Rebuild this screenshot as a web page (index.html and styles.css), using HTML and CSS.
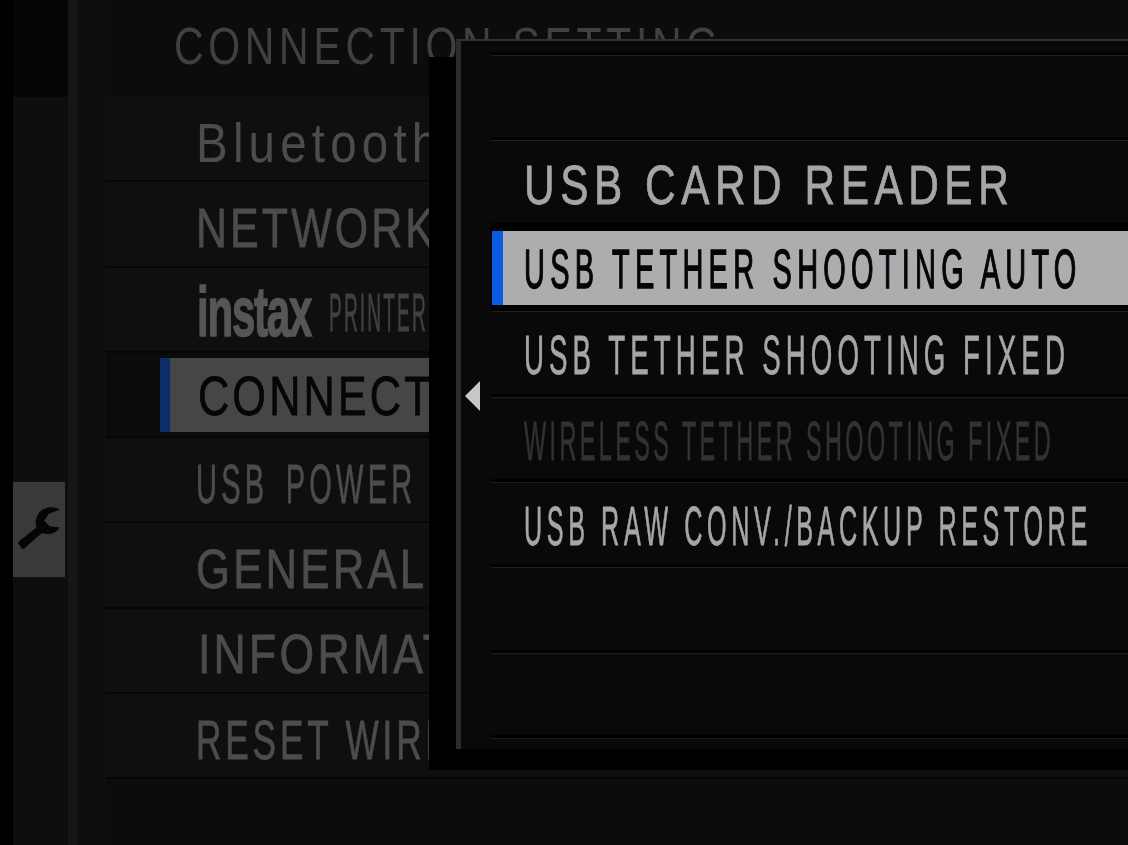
FILE: index.html
```html
<!DOCTYPE html>
<html lang="en">
<head>
<meta charset="utf-8">
<title>Connection Setting</title>
<link rel="stylesheet" href="styles.css">
</head>
<body>
<div class="screen">
  <div class="edge"></div>
  <aside class="rail">
    <div class="rail-top"></div>
    <div class="tile">
      <svg class="wrench" viewBox="0 0 44 44" width="49" height="49" aria-hidden="true"><path d="M42 5C35 1 26 3 22 10C20 14 20 18 21 21L6 33Q4 35 5 36L8 40Q10 41 11 39L26 26C32 28 38 27 42 21L33 20L28 15L32 9Z"/></svg>
    </div>
  </aside>
  <div class="strip"></div>
  <div class="gutter"></div>
  <main class="main">
    <h1 class="title"><span class="t t-title">CONNECTION SETTING</span></h1>
    <ul class="menu">
      <li class="item"><span class="t t-bt">Bluetooth SETTING</span></li>
      <li class="item"><span class="t t-net">NETWORK SETTING</span></li>
      <li class="item"><span class="instax">instax</span><span class="t t-printer">PRINTER CONNECTION SETTING</span></li>
      <li class="item item-on"><div class="bar"><span class="t t-conn">CONNECTION MODE</span></div></li>
      <li class="item"><span class="t t-usb">USB POWER SUPPLY/COMM SETTING</span></li>
      <li class="item"><span class="t t-gen">GENERAL SETTINGS</span></li>
      <li class="item"><span class="t t-info">INFORMATION</span></li>
      <li class="item"><span class="t t-reset">RESET WIRELESS SETTING</span></li>
    </ul>
  </main>
  <div class="shadow"></div>
  <section class="popup">
    <div class="arrow"></div>
    <ul class="options">
      <li class="opt"></li>
      <li class="opt"><span class="t o-card">USB CARD READER</span></li>
      <li class="opt opt-on"><div class="opt-bar"><span class="t o-auto">USB TETHER SHOOTING AUTO</span></div></li>
      <li class="opt"><span class="t o-fixed">USB TETHER SHOOTING FIXED</span></li>
      <li class="opt"><span class="t o-wifi">WIRELESS TETHER SHOOTING FIXED</span></li>
      <li class="opt"><span class="t o-raw">USB RAW CONV./BACKUP RESTORE</span></li>
      <li class="opt"></li>
      <li class="opt"></li>
      <li class="opt"></li>
    </ul>
  </section>
</div>
</body>
</html>
```
FILE: styles.css
```css
* { box-sizing: border-box; }
html, body { margin: 0; padding: 0; background: #000; }
ul { list-style: none; margin: 0; padding: 0; }

.screen {
  position: relative;
  display: flex;
  width: 1128px;
  height: 845px;
  overflow: hidden;
  background: #000;
  font-family: "Liberation Sans", sans-serif;
  white-space: nowrap;
  filter: blur(0.5px);
}

/* The camera font is condensed: each label is narrowed from its left edge. */
.t {
  display: inline-block;
  flex: none;
  transform-origin: left center;
  letter-spacing: 3px;
  -webkit-text-stroke: 0.8px currentColor;
}

.edge { flex: 0 0 13px; background: #000; }
.rail { flex: 0 0 55px; background: #0e0e10; }
.rail-top { height: 97px; background: #050506; }
.tile {
  display: flex;
  align-items: center;
  justify-content: center;
  width: 52px;
  height: 95px;
  margin-top: 385px;
  background: #39393b;
}
.wrench { display: block; flex: none; fill: #050505; margin-left: -3px; margin-top: -3px; }
.strip { flex: 0 0 10px; background: #161618; }
.gutter { flex: 0 0 28px; background: #0e0e10; }

.main { flex: 1; min-width: 0; background: #0c0c0e; }
.title {
  height: 97px;
  margin: 0;
  padding: 20px 0 0 68px;
  font-size: 52px;
  line-height: 52px;
  font-weight: 400;
  color: #404042;
}
.t-title { letter-spacing: 6px; transform: scaleX(.787); -webkit-text-stroke: 0; }
.item {
  display: flex;
  align-items: center;
  height: 85.3px;
  padding: 8px 0 0 90px;
  background: #0f0f11;
  border-bottom: 2px solid #060607;
  color: #4c4c4e;
  font-size: 55px;
  line-height: 60px;
}
.t-bt { letter-spacing: 6px; transform: scaleX(.864); -webkit-text-stroke: 0; }
.t-net { letter-spacing: 4px; transform: scaleX(.78); }
.t-usb { letter-spacing: 8px; word-spacing: 10px; transform: scaleX(.527); }
.t-gen { letter-spacing: 4px; transform: scaleX(.795); }
.t-info { letter-spacing: 4px; transform: scaleX(.81); margin-left: 2px; }
.t-reset { letter-spacing: 6px; transform: scaleX(.64); }
.t-printer {
  font-size: 53px;
  letter-spacing: 6px;
  color: #414143;
  margin-left: 17px;
  transform: scaleX(.36);
}
.instax {
  display: inline-block;
  flex: none;
  width: 115px;
  margin-left: 1px;
  margin-top: -2px;
  font-weight: 700;
  font-size: 70px;
  letter-spacing: -2px;
  color: #565658;
  -webkit-text-stroke: 1.5px currentColor;
  transform: scaleX(.6);
  transform-origin: left center;
}
.item-on { padding: 5px 0 4px 54px; background: #0b0b0c; }
.bar {
  display: flex;
  align-items: center;
  flex: 1;
  min-width: 0;
  height: 74px;
  padding: 2px 0 0 28px;
  border-left: 10px solid #0c2e66;
  background: #464648;
  color: #060608;
}
.t-conn { letter-spacing: 4px; transform: scaleX(.786); }

.shadow {
  position: absolute;
  left: 429px;
  top: 57px;
  right: 0;
  height: 713px;
  background: #000;
}
.popup {
  position: absolute;
  left: 456px;
  top: 39px;
  right: 0;
  height: 710px;
  padding: 14px 0 0 30px;
  background: #09090b;
  border-top: 2px solid #333335;
  border-left: 5px solid #2c2c2e;
  color: #a6a6a8;
  font-size: 55px;
}
.arrow {
  position: absolute;
  left: 4px;
  top: 340px;
  width: 0;
  height: 0;
  border-top: 15.5px solid transparent;
  border-bottom: 15.5px solid transparent;
  border-right: 15px solid #c8c8ca;
}
.opt {
  display: flex;
  align-items: center;
  height: 85.4px;
  padding: 2px 0 0 33px;
  border-top: 1px solid #1e1e20;
  box-shadow: 0 -3px 0 #000;
  line-height: 60px;
}
.opt-on { padding: 4px 0 5px 0; background: #000; border-top-color: #000; }
.opt-bar {
  display: flex;
  align-items: center;
  flex: 1;
  min-width: 0;
  height: 74px;
  margin-left: 1px;
  padding: 2px 0 0 21px;
  border-left: 11px solid #0a5be0;
  background: #adadaf;
  color: #050507;
}
.o-card { letter-spacing: 7.2px; transform: scaleX(.77); }
.o-auto { letter-spacing: 10px; transform: scaleX(.526); -webkit-text-stroke: 1.4px currentColor; }
.o-fixed { letter-spacing: 10px; transform: scaleX(.504); }
.o-wifi { letter-spacing: 8px; transform: scaleX(.426); color: #323234; }
.o-raw { letter-spacing: 10px; transform: scaleX(.458); }
```
